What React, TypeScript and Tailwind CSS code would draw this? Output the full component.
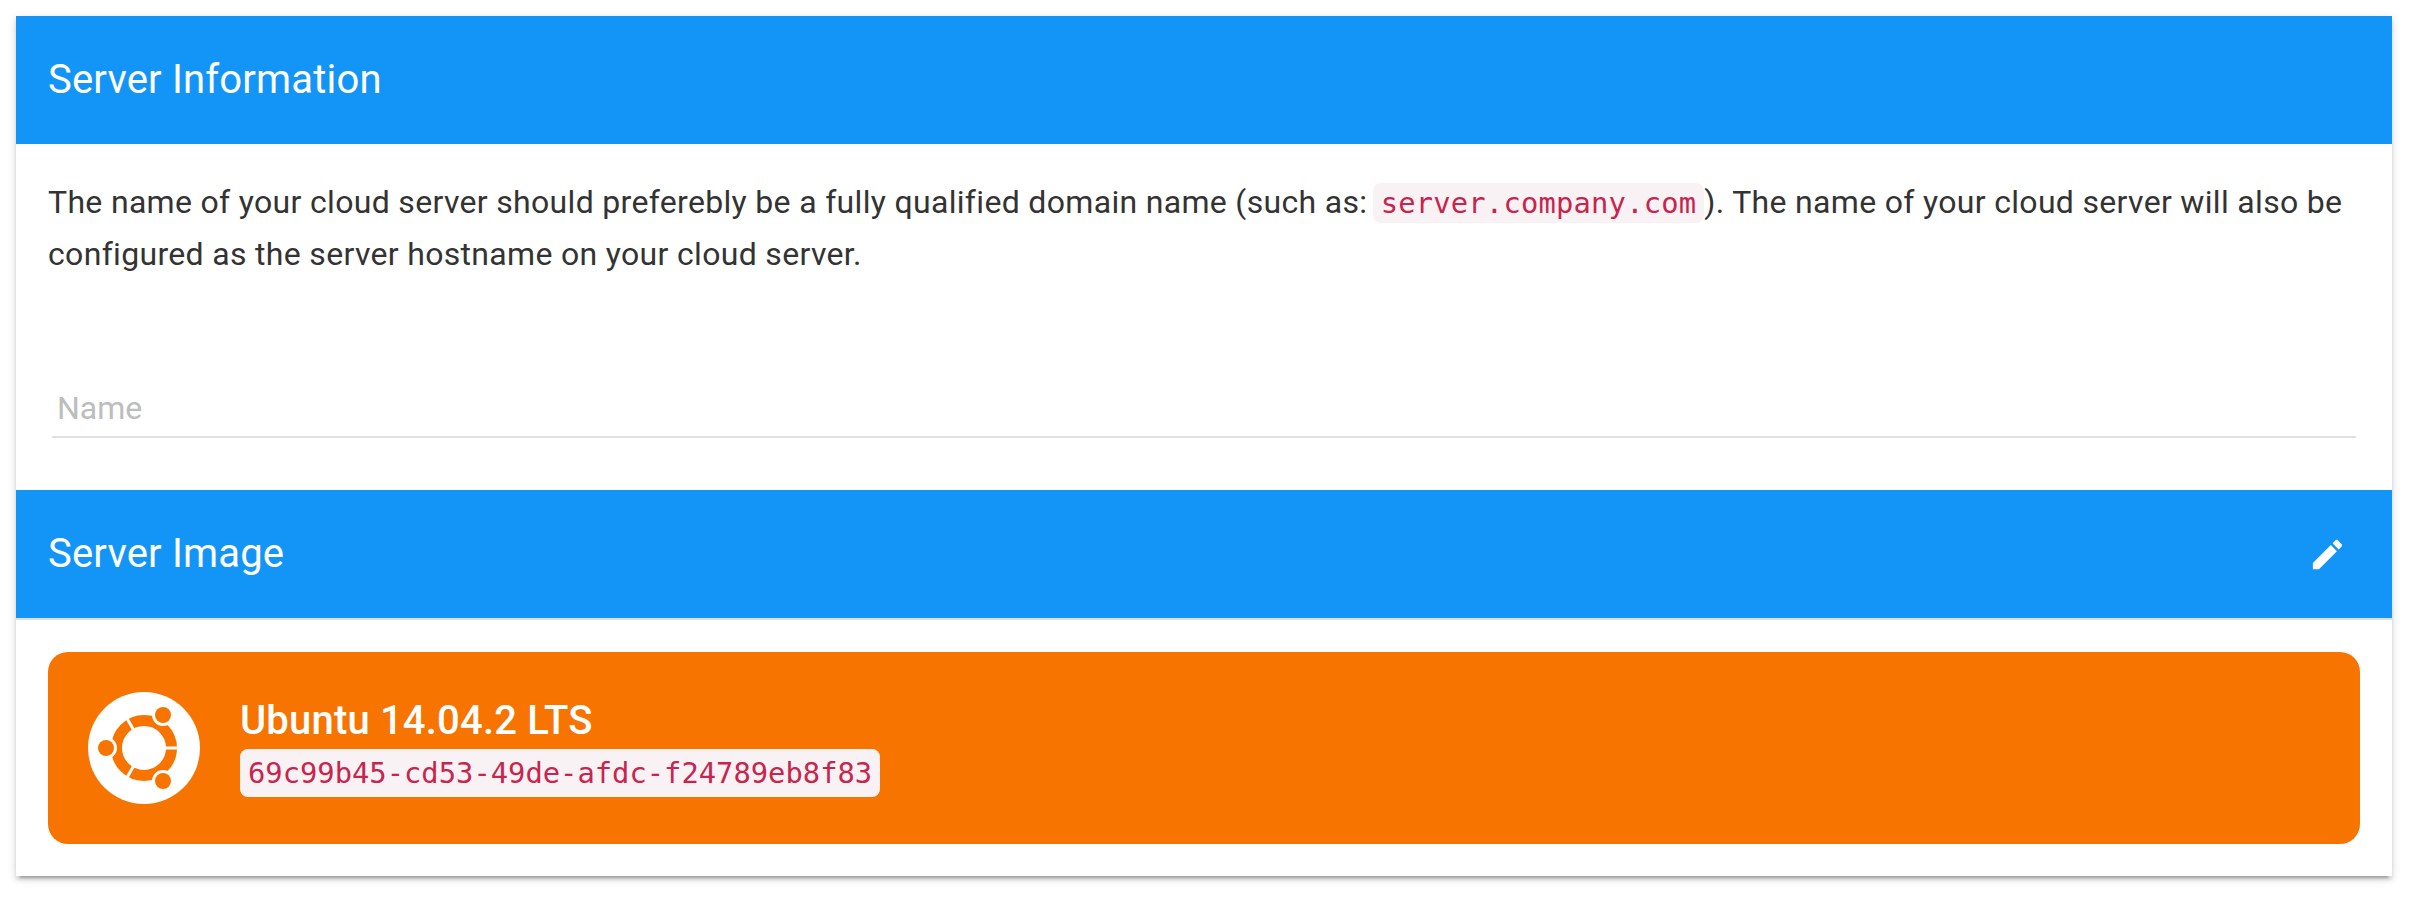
import React from "react";

const UbuntuLogo = () => (
  <svg viewBox="0 0 112 112" className="w-[112px] h-[112px] shrink-0">
    <circle cx="56" cy="56" r="56" fill="#fff" />
    <circle cx="56" cy="56" r="27.5" fill="none" stroke="#f77400" strokeWidth="11" />
    <path d="M56 56H92M56 56L38 24.8M56 56L38 87.2" stroke="#fff" strokeWidth="3" />
    <circle cx="75" cy="23" r="11" fill="#fff" />
    <circle cx="18" cy="56" r="11" fill="#fff" />
    <circle cx="75" cy="89" r="11" fill="#fff" />
    <circle cx="75" cy="23" r="8" fill="#f77400" />
    <circle cx="18" cy="56" r="8" fill="#f77400" />
    <circle cx="75" cy="89" r="8" fill="#f77400" />
  </svg>
);

const SectionHeader = ({ title, editable }: { title: string; editable?: boolean }) => (
  <div className="h-[128px] bg-[#1395f8] flex items-center justify-between pl-[32px] pr-[45px]">
    <h2 className="text-[40px] font-normal tracking-[0.18px] text-white">{title}</h2>
    {editable && (
      <svg viewBox="0 0 24 24" className="w-[39px] h-[39px]" fill="#fff">
        <path d="M3 17.25V21h3.75L17.81 9.94l-3.75-3.75L3 17.25zM20.71 7.04c.39-.39.39-1.02 0-1.41l-2.34-2.34c-.39-.39-1.02-.39-1.41 0l-1.83 1.83 3.75 3.75 1.83-1.83z" />
      </svg>
    )}
  </div>
);

const App = () => {
  return (
    <div className="min-h-[904px] bg-white p-[16px] pr-[18px] font-['Roboto',sans-serif]">
      <div className="bg-white shadow-[0_4px_4px_rgba(0,0,0,0.14),0_6px_2px_-4px_rgba(0,0,0,0.2),0_2px_10px_rgba(0,0,0,0.12)]">
        <SectionHeader title="Server Information" />
        <div className="px-[32px] pt-[32px] pb-[52px]">
          <p className="text-[32px] leading-[52px] tracking-[0.32px] text-[#333]">
            The name of your cloud server should preferebly be a fully qualified domain name (such as:{" "}
            <code className="font-['DejaVu_Sans_Mono',monospace] text-[28.8px] leading-none tracking-[0.2px] text-[#c7254e] bg-[#f9f2f4] rounded-[8px] ml-[-3px] px-[8px] py-[3px]">
              server.company.com
            </code>
            ). The name of your cloud server will also be configured as the server hostname on your cloud server.
          </p>
          <div className="mt-[100px] mx-[4px] h-[58px] border-b-2 border-[#e0e0e0] flex items-center">
            <input
              placeholder="Name"
              className="w-full px-[5px] text-[32px] outline-none bg-transparent placeholder:text-[#bdbdbd]"
            />
          </div>
        </div>
        <SectionHeader title="Server Image" editable />
        <div className="p-[32px] border-t-2 border-[#e0e0e0]">
          <div className="h-[192px] bg-[#f77400] rounded-[20px] flex items-center pl-[40px] gap-[40px]">
            <UbuntuLogo />
            <div className="flex flex-col items-start gap-[6px]">
              <div className="text-[40px] font-medium tracking-[0.18px] text-white leading-[44px]">Ubuntu 14.04.2 LTS</div>
              <code className="font-['DejaVu_Sans_Mono',monospace] text-[28.8px] leading-[48px] text-[#c7254e] bg-[#f9f2f4] rounded-[8px] px-[8px]">
                69c99b45-cd53-49de-afdc-f24789eb8f83
              </code>
            </div>
          </div>
        </div>
      </div>
    </div>
  );
};

export default App;
